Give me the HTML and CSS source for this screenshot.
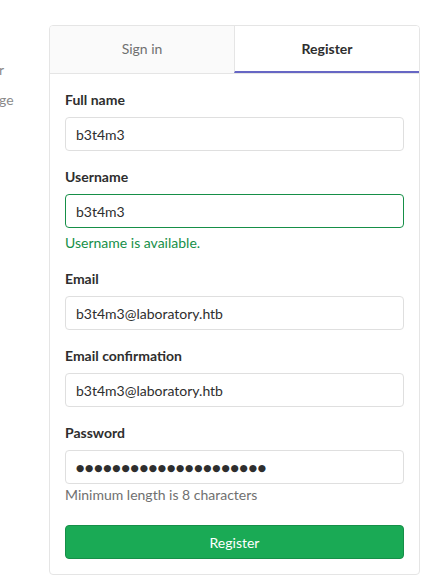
FILE: index.html
```html
<!DOCTYPE html>
<html>
<head>
<meta charset="utf-8">
<link rel="stylesheet" href="styles.css">
</head>
<body>
<div class="page">
  <div class="side">
    <div class="side-line first">r</div>
    <div class="side-line">ge</div>
  </div>
  <div class="card">
    <div class="tabs">
      <div class="tab">Sign in</div>
      <div class="tab active">Register</div>
    </div>
    <form class="form">
      <div class="group">
        <label class="label">Full name</label>
        <input class="input" type="text" value="b3t4m3">
      </div>
      <div class="group">
        <label class="label">Username</label>
        <input class="input valid" type="text" value="b3t4m3">
        <div class="hint success">Username is available.</div>
      </div>
      <div class="group">
        <label class="label">Email</label>
        <input class="input" type="text" value="b3t4m3@laboratory.htb">
      </div>
      <div class="group">
        <label class="label">Email confirmation</label>
        <input class="input" type="text" value="b3t4m3@laboratory.htb">
      </div>
      <div class="group">
        <label class="label">Password</label>
        <div class="input dots">●●●●●●●●●●●●●●●●●●●●●</div>
        <div class="hint muted">Minimum length is 8 characters</div>
      </div>
      <button class="btn" type="button">Register</button>
    </form>
  </div>
</div>
</body>
</html>
```

FILE: styles.css
```css
* { box-sizing: border-box; }
html, body { margin: 0; padding: 0; background: #fff; }
body {
  font-family: Lato, "Noto Sans", "DejaVu Sans", sans-serif;
  font-size: 14px;
  color: #2e2e2e;
}
.page {
  display: flex;
  align-items: flex-start;
  padding-top: 25px;
}
.side {
  width: 49px;
  flex: none;
  color: #8a8a8a;
  font-size: 14px;
  margin-left: -1px;
}
.side-line { line-height: 20px; height: 20px; }
.side-line.first { margin-top: 35px; margin-bottom: 10px; }
.card {
  width: 371px;
  flex: none;
  border: 1px solid #e5e5e5;
  border-radius: 4px;
  overflow: hidden;
  margin-left: 1px;
}
.tabs {
  display: flex;
  border-bottom: 1px solid #e5e5e5;
}
.tab {
  flex: 1;
  height: 47px;
  display: flex;
  align-items: center;
  justify-content: center;
  background: #fafafa;
  color: #707070;
  border-bottom: 2px solid transparent;
}
.tab + .tab { border-left: 1px solid #e5e5e5; }
.tab.active {
  background: #fff;
  color: #2e2e2e;
  font-weight: 700;
  border-bottom-color: #6666c4;
}
.form {
  padding: 16px 15px 15px;
  display: flex;
  flex-direction: column;
}
.group { margin-bottom: 16px; display: flex; flex-direction: column; }
.label {
  font-weight: 700;
  line-height: 20px;
  margin-bottom: 7px;
}
.input {
  height: 34px;
  width: 100%;
  border: 1px solid #dfdfdf;
  border-radius: 4px;
  padding: 0 10px;
  font-family: inherit;
  font-size: 14px;
  color: #2e2e2e;
  background: #fff;
  outline: none;
}
.input.valid { border-color: #168f48; }
.dots {
  display: flex;
  align-items: center;
  font-family: "DejaVu Sans", sans-serif;
  font-size: 9.5px;
  letter-spacing: 0.8px;
  color: #2e2e2e;
}
.hint { line-height: 20px; margin-top: 5px; }
.hint.success { color: #168f48; }
.hint.muted { color: #707070; margin-top: 1px; margin-bottom: 4px; }
.btn {
  height: 34px;
  width: 100%;
  border: 1px solid #168f48;
  border-radius: 4px;
  background: #1aaa55;
  color: #fff;
  font-family: inherit;
  font-size: 14px;
}
```
